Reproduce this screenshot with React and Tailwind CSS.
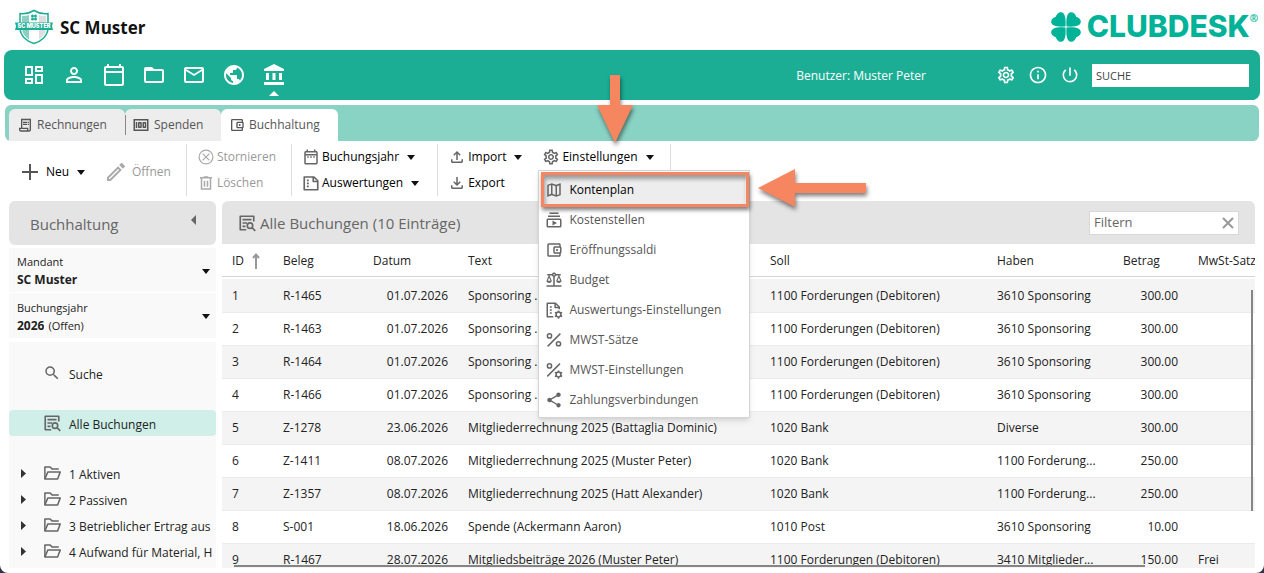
import { useState } from 'react'
import {
    MdAccountBalance,
    MdFolderOpen,
    MdInfoOutline,
    MdMailOutline,
    MdOutlineAccountBalanceWallet,
    MdOutlineBalance,
    MdOutlineCalendarToday,
    MdOutlineDashboard,
    MdOutlineDateRange,
    MdOutlineEdit,
    MdOutlineFileDownload,
    MdOutlineFileUpload,
    MdOutlineMap,
    MdOutlineMoney,
    MdOutlineReceiptLong,
    MdOutlineSettings,
    MdOutlineSubscriptions,
    MdPersonOutline,
    MdPowerSettingsNew,
    MdPublic,
    MdSearch,
    MdShare,
} from 'react-icons/md'

const mainNav = [
    { label: 'Dashboard', icon: MdOutlineDashboard },
    { label: 'Kontakte', icon: MdPersonOutline },
    { label: 'Kalender', icon: MdOutlineCalendarToday },
    { label: 'Dateien', icon: MdFolderOpen },
    { label: 'E-Mail', icon: MdMailOutline },
    { label: 'Website', icon: MdPublic },
    { label: 'Finanzen', icon: MdAccountBalance, active: true },
]

const bookings = [
    ['1', 'R-1465', '01.07.2026', 'Sponsoring ...', '1100 Forderungen (Debitoren)', '3610 Sponsoring', '300.00', ''],
    ['2', 'R-1463', '01.07.2026', 'Sponsoring ...', '1100 Forderungen (Debitoren)', '3610 Sponsoring', '300.00', ''],
    ['3', 'R-1464', '01.07.2026', 'Sponsoring ...', '1100 Forderungen (Debitoren)', '3610 Sponsoring', '300.00', ''],
    ['4', 'R-1466', '01.07.2026', 'Sponsoring ...', '1100 Forderungen (Debitoren)', '3610 Sponsoring', '300.00', ''],
    ['5', 'Z-1278', '23.06.2026', 'Mitgliederrechnung 2025 (Battaglia Dominic)', '1020 Bank', 'Diverse', '300.00', ''],
    ['6', 'Z-1411', '08.07.2026', 'Mitgliederrechnung 2025 (Muster Peter)', '1020 Bank', '1100 Forderung...', '250.00', ''],
    ['7', 'Z-1357', '08.07.2026', 'Mitgliederrechnung 2025 (Hatt Alexander)', '1020 Bank', '1100 Forderung...', '250.00', ''],
    ['8', 'S-001', '18.06.2026', 'Spende (Ackermann Aaron)', '1010 Post', '3610 Sponsoring', '10.00', ''],
    ['9', 'R-1467', '28.07.2026', 'Mitgliedsbeiträge 2026 (Muster Peter)', '1100 Forderungen (Debitoren)', '3410 Mitglieder...', '150.00', 'Frei'],
]

const accounts = ['1 Aktiven', '2 Passiven', '3 Betrieblicher Ertrag aus', '4 Aufwand für Material, H']

const Svg = ({ children, className, ...rest }) => (
    <svg
        viewBox="0 0 24 24"
        fill="none"
        stroke="currentColor"
        strokeWidth="2"
        aria-hidden="true"
        className={className}
        {...rest}
    >
        {children}
    </svg>
)

const ListSearchIcon = ({ className }) => (
    <Svg className={className} strokeWidth="2.2">
        <path d="M21 10V3H3v18h8" strokeLinejoin="round" />
        <path d="M6 7.5h12M6 12h6M6 16.5h4" />
        <circle cx="16" cy="15.5" r="3.6" />
        <path d="M18.5 18L23 22.5" />
    </Svg>
)

const FolderIcon = ({ className }) => (
    <Svg className={className} strokeLinejoin="round">
        <path d="M2.5 20V4h7L12 6.5h9" />
        <path d="M2.5 20L6.5 10.5H23L19.5 20z" />
    </Svg>
)

const ReportIcon = ({ className }) => (
    <Svg className={className} strokeWidth="2.2" strokeLinejoin="round">
        <path d="M3 4h13l5 5v12H3z" />
        <path d="M15 4v6h6" />
        <path d="M6.5 8.5H9M6.5 12.5H9M6.5 16.5H9" />
    </Svg>
)

const Cog = () => (
    <>
        <circle cx="18" cy="18" r="3.2" />
        <path d="M18 12.5v2M18 21.5v2M13.2 15.2l1.8 1M21 19.7l1.8 1M13.2 20.8l1.8-1M21 16.2l1.8-1" />
    </>
)

const ReportCogIcon = ({ className }) => (
    <Svg className={className} strokeLinejoin="round">
        <path d="M11 21H3V3h11l5 5v3" />
        <path d="M13.5 3v5.5H19" />
        <path d="M6.5 8H9M6.5 12H9M6.5 16H9" />
        <Cog />
    </Svg>
)

const PercentIcon = ({ className }) => (
    <Svg className={className}>
        <circle cx="6" cy="6.5" r="2.8" />
        <circle cx="18" cy="17" r="2.8" />
        <path d="M3.5 20.5L20.5 3.5" />
    </Svg>
)

const PercentCogIcon = ({ className }) => (
    <Svg className={className}>
        <circle cx="6" cy="6.5" r="2.8" />
        <path d="M3 20.5L20 3.5" />
        <Cog />
    </Svg>
)

const CancelIcon = ({ className }) => (
    <Svg className={className} strokeWidth="1.6">
        <circle cx="12" cy="12" r="9.2" />
        <path d="M7.5 7.5l9 9M16.5 7.5l-9 9" />
    </Svg>
)

const TrashIcon = ({ className }) => (
    <Svg className={className}>
        <path d="M4 5h16M9 4h6M6 5v15h12V5" />
        <path d="M10 9v8M14 9v8" />
    </Svg>
)

const Caret = () => (
    <svg viewBox="0 0 8 5" aria-hidden="true" className="h-[5px] w-2 shrink-0 fill-[#111]">
        <path d="M0 0h8L4 5z" />
    </svg>
)

const settingsMenu = [
    { label: 'Kontenplan', icon: MdOutlineMap, active: true },
    { label: 'Kostenstellen', icon: MdOutlineSubscriptions },
    { label: 'Eröffnungssaldi', icon: MdOutlineAccountBalanceWallet },
    { label: 'Budget', icon: MdOutlineBalance },
    { label: 'Auswertungs-Einstellungen', icon: ReportCogIcon },
    { label: 'MWST-Sätze', icon: PercentIcon },
    { label: 'MWST-Einstellungen', icon: PercentCogIcon },
    { label: 'Zahlungsverbindungen', icon: MdShare },
]

const ClubCrest = () => (
    <svg viewBox="0 0 38 36" aria-hidden="true" className="h-9 w-[38px]">
        <path d="M19 1.5C15 4 9 5 5 4.5v14C5 27 12 32.5 19 34.5 26 32.5 33 27 33 18.5v-14C29 5 23 4 19 1.5z" fill="#fff" stroke="#1bae94" strokeWidth="1.5" />
        <path d="M7 7c3 0 5-.3 7-1v24.500C10 28 7 24 7 18.500z" fill="#8cd0c2" />
        <path d="M24 6c2 .7 4 1 7 1v11.500c0 5.500-3 9.500-7 12z" fill="#dedede" />
        <g fill="#1bae94">
            <circle cx="17.5" cy="7" r="1.5" />
            <circle cx="20.5" cy="7" r="1.5" />
            <circle cx="17.5" cy="10" r="1.5" />
            <circle cx="20.5" cy="10" r="1.5" />
            <path d="M0 13.500h38l-1 3.700 1 3.800H0l1-3.800z" />
        </g>
        <text x="19" y="19.4" fontSize="5.6" fontWeight="900" fontFamily="Inter, sans-serif" textAnchor="middle" fill="#fff">
            SC MUSTER
        </text>
    </svg>
)

const Clover = () => (
    <svg viewBox="0 0 30 30" aria-hidden="true" className="size-[30px] fill-[#00b398]">
        {[0, 90, 180, 270].map((deg) => (
            <path
                key={deg}
                transform={`rotate(${deg} 15 15)`}
                d="M14.5 14.5C14.8 10 14.8 5 13 2 11.500-.5 8-.3 6.300 2 5.500 3 5 4 4.800 4.800 4 5 3 5.500 2 6.300-.3 8-.5 11.500 2 13 5 14.800 10 14.800 14.500 14.500z"
            />
        ))}
    </svg>
)

const TopBar = () => (
    <nav className="flex h-[50px] shrink-0 items-center rounded-lg bg-[#1bae94] pr-[11px] pl-[18px] text-white">
        <div className="flex gap-4">
            {mainNav.map(({ label, icon: Icon, active }) => (
                <a key={label} href="#" aria-label={label} className="relative">
                    <Icon className="size-6" />
                    {active && (
                        <svg viewBox="0 0 10 5" aria-hidden="true" className="absolute top-7 left-[7px] h-[5px] w-2.5 fill-white">
                            <path d="M0 5h10L5 0z" />
                        </svg>
                    )}
                </a>
            ))}
        </div>
        <span className="mr-[70px] ml-auto pt-0.5 text-[12px]">Benutzer: Muster Peter</span>
        <div className="flex gap-3">
            <button type="button" aria-label="Einstellungen">
                <MdOutlineSettings className="size-5" />
            </button>
            <button type="button" aria-label="Info">
                <MdInfoOutline className="size-5" />
            </button>
            <button type="button" aria-label="Abmelden">
                <MdPowerSettingsNew className="size-5" />
            </button>
        </div>
        <input
            type="search"
            aria-label="Suche"
            placeholder="SUCHE"
            className="ml-3 h-[23px] w-[157px] bg-white px-1 text-[11px] text-[#333] outline-none placeholder:text-[#444]"
        />
    </nav>
)

const Tabs = () => (
    <div className="mx-px mt-[5px] flex h-9 shrink-0 items-end rounded-md bg-[#89d3c4] pl-1 text-[12px] text-[#555]">
        <a href="#" className="flex h-8 w-[116px] items-center gap-1 rounded-t-md bg-[#ededed] pl-2">
            <MdOutlineReceiptLong className="size-4" />
            Rechnungen
        </a>
        <a href="#" className="flex h-8 w-24 items-center rounded-t-md bg-[#ededed]">
            <span className="mr-1.5 h-5 border-l border-[#888]" />
            <MdOutlineMoney className="mr-1 size-[18px]" />
            Spenden
        </a>
        <a href="#" aria-current="page" className="flex h-8 w-[117px] items-center gap-1 rounded-t-md bg-white pl-2">
            <MdOutlineAccountBalanceWallet className="size-4" />
            Buchhaltung
        </a>
    </div>
)

const SettingsDropdown = () => (
    <div className="relative">
        <button type="button" aria-haspopup="menu" aria-expanded="true" className="flex h-[26px] items-center gap-0.5">
            <MdOutlineSettings className="size-[18px] text-[#666]" />
            <span className="mr-1.5">Einstellungen</span>
            <Caret />
        </button>

        <ul
            role="menu"
            className="absolute top-[26px] -left-1 z-20 w-[212px] border border-[#d4d4d4] bg-white px-1 pt-1 pb-0.5 shadow-md"
        >
            {settingsMenu.map(({ label, icon: Icon, active }) => (
                <li key={label} role="none">
                    <button
                        type="button"
                        role="menuitem"
                        className={
                            active
                                ? 'flex h-[30px] w-full items-center gap-1.5 bg-[#ededed] px-0.5 text-black'
                                : 'flex h-[30px] w-full items-center gap-1.5 px-0.5 text-[#555]'
                        }
                    >
                        <Icon className="size-[18px] text-[#666]" />
                        {label}
                    </button>
                </li>
            ))}
            <li
                aria-hidden="true"
                className="pointer-events-none absolute top-px right-0 left-0.5 h-[35px] border-3 border-[#f58660] shadow-[1px_3px_4px_rgba(0,0,0,0.5),inset_1px_4px_4px_rgba(0,0,0,0.35)]"
            />
        </ul>

        {/* callout arrows */}
        <svg
            viewBox="0 0 36 68"
            aria-hidden="true"
            className="absolute -top-[69px] left-[55px] z-30 h-[68px] w-9 fill-[#f58660] drop-shadow-[1px_3px_2px_rgba(0,0,0,0.5)]"
        >
            <path d="M13 0h10v30h13L18 68 0 30h13z" />
        </svg>
        <svg
            viewBox="0 0 108 38"
            aria-hidden="true"
            className="absolute top-[25px] left-[216px] z-30 h-[38px] w-[108px] fill-[#f58660] drop-shadow-[1px_3px_2px_rgba(0,0,0,0.5)]"
        >
            <path d="M0 19L37 0v14h71v10H37v14z" />
        </svg>
    </div>
)

const toolButton = 'flex h-[26px] items-center gap-0.5'

const Toolbar = () => (
    <div className="flex h-[60px] shrink-0 items-start px-[18px] pt-[3px] text-[12px] text-black">
        <div className="flex h-14 items-center">
            <button type="button" className="flex w-[82px] items-center">
                <svg viewBox="0 0 16 16" aria-hidden="true" className="mr-2 size-4 stroke-[#555]" fill="none" strokeWidth="2">
                    <path d="M8 0v16M0 8h16" />
                </svg>
                <span className="mr-2">Neu</span>
                <Caret />
            </button>
            <button type="button" disabled className="flex items-center gap-1 text-[#999]">
                <MdOutlineEdit className="size-6 text-[#aaa]" />
                Öffnen
            </button>
        </div>
        <div className="ml-[15px] border-l border-[#ddd] pl-2.5 text-[#999]">
            <button type="button" disabled className={toolButton}>
                <CancelIcon className="size-[18px] text-[#aaa]" />
                Stornieren
            </button>
            <button type="button" disabled className={toolButton}>
                <TrashIcon className="size-[18px] text-[#aaa]" />
                Löschen
            </button>
        </div>
        <div className="ml-[15px] border-l border-[#ddd] pl-2.5">
            <button type="button" className={toolButton}>
                <MdOutlineDateRange className="size-[18px] text-[#666]" />
                <span className="mr-1.5">Buchungsjahr</span>
                <Caret />
            </button>
            <button type="button" className={toolButton}>
                <ReportIcon className="size-[18px] text-[#666]" />
                <span className="mr-1.5">Auswertungen</span>
                <Caret />
            </button>
        </div>
        <div className="ml-[18px] border-l border-[#ddd] pl-2.5">
            <button type="button" className={toolButton}>
                <MdOutlineFileUpload className="size-[18px] text-[#666]" />
                <span className="mr-1.5">Import</span>
                <Caret />
            </button>
            <button type="button" className={toolButton}>
                <MdOutlineFileDownload className="size-[18px] text-[#666]" />
                Export
            </button>
        </div>
        <div className="ml-5 h-[52px] border-r border-[#ddd] pr-4">
            <SettingsDropdown />
        </div>
    </div>
)

const Sidebar = () => (
    <aside className="flex w-[207px] shrink-0 flex-col text-[12px] text-[#222]">
        <div className="flex h-11 shrink-0 items-center justify-between rounded-md bg-[#e4e4e4] pr-5 pl-[21px]">
            <h2 className="pt-0.5 text-[15px] text-[#666]">Buchhaltung</h2>
            <button type="button" aria-label="Einklappen">
                <svg viewBox="0 0 5 10" aria-hidden="true" className="mb-1.5 h-2.5 w-[5px] fill-[#666]">
                    <path d="M5 0v10L0 5z" />
                </svg>
            </button>
        </div>

        <div className="mt-[3px] flex h-11 shrink-0 items-center bg-[#f9f9f9] pt-0.5 pr-1.5 pl-2">
            <div className="grow">
                <label htmlFor="mandant" className="block text-[11px] leading-[18px]">
                    Mandant
                </label>
                <select id="mandant" className="block w-full appearance-none leading-[18px] font-bold outline-none">
                    <option>SC Muster</option>
                </select>
            </div>
            <Caret />
        </div>
        <div className="mt-px flex h-[45px] shrink-0 items-center bg-[#f9f9f9] pt-0.5 pr-1.5 pl-2">
            <div className="grow">
                <label htmlFor="jahr" className="block text-[11px] leading-[18px]">
                    Buchungsjahr
                </label>
                <div className="flex gap-1 leading-[18px]">
                    <select id="jahr" className="field-sizing-content appearance-none font-bold outline-none">
                        <option>2026</option>
                    </select>
                    <span className="text-[11px]">(Offen)</span>
                </div>
            </div>
            <Caret />
        </div>

        <nav className="mt-1 min-h-0 grow overflow-hidden bg-[#f9f9f9] pt-[18px]">
            <a href="#" className="flex h-[26px] items-center gap-2 pt-1 pl-[34px]">
                <MdSearch className="mb-1 size-[18px] text-[#666]" />
                Suche
            </a>
            <a href="#" aria-current="page" className="mt-6 flex h-[26px] items-center gap-2 rounded-sm bg-[#d0efe9] pt-1 pl-[34px]">
                <ListSearchIcon className="mb-1 size-[18px] text-[#666]" />
                Alle Buchungen
            </a>
            <ul className="mt-6">
                {accounts.map((name) => (
                    <li key={name}>
                        <a href="#" className="flex h-[26px] items-center gap-2 pt-1 pl-3 whitespace-nowrap">
                            <svg viewBox="0 0 5 9" aria-hidden="true" className="mr-[9px] mb-1 h-[9px] w-[5px] shrink-0 fill-[#333]">
                                <path d="M0 0v9l5-4.500z" />
                            </svg>
                            <FolderIcon className="mb-1 size-[18px] shrink-0 text-[#666]" />
                            {name}
                        </a>
                    </li>
                ))}
            </ul>
        </nav>
    </aside>
)

const BookingsTable = () => {
    const [filter, setFilter] = useState('')
    const rows = bookings.filter((row) => row.join(' ').toLowerCase().includes(filter.toLowerCase()))

    return (
        <main className="flex min-w-0 grow flex-col">
            <div className="flex h-[43px] shrink-0 items-center rounded-t-md bg-[#e4e4e4] pr-4 pl-4 text-[#666]">
                <ListSearchIcon className="mr-1 size-[18px]" />
                <h1 className="pt-0.5 text-[15px]">Alle Buchungen (10 Einträge)</h1>
                <div className="ml-auto flex h-6 w-[150px] items-center border border-[#d8d8d8] bg-white pr-1 pl-1">
                    <input
                        type="text"
                        aria-label="Filtern"
                        placeholder="Filtern"
                        value={filter}
                        onChange={(e) => setFilter(e.target.value)}
                        className="min-w-0 grow text-[13px] outline-none placeholder:text-[#666]"
                    />
                    <button type="button" aria-label="Filter löschen" onClick={() => setFilter('')}>
                        <Svg className="size-3 text-[#999]" strokeWidth="4">
                            <path d="M2 2l20 20M22 2L2 22" />
                        </Svg>
                    </button>
                </div>
            </div>

            <div className="relative min-h-0 grow overflow-hidden">
                <table className="w-full table-fixed border-collapse text-left text-[12px] whitespace-nowrap text-[#222]">
                    <colgroup>
                        <col className="w-[51px]" />
                        <col className="w-[90px]" />
                        <col className="w-[95px]" />
                        <col />
                        <col className="w-[227px]" />
                        <col className="w-[126px]" />
                        <col className="w-[75px]" />
                        <col className="w-[67px]" />
                    </colgroup>
                    <thead>
                        <tr className="h-8 border-b border-[#d4d4d4] [&>th]:px-2.5 [&>th]:pt-0.5 [&>th]:font-normal">
                            <th>
                                <span className="flex items-center gap-2">
                                    ID
                                    <Svg viewBox="0 0 8 16" className="h-4 w-2 text-[#999]" strokeWidth="2">
                                        <path d="M4 16V1M1 5l3-3.500L7 5" />
                                    </Svg>
                                </span>
                            </th>
                            <th>Beleg</th>
                            <th>Datum</th>
                            <th>Text</th>
                            <th>Soll</th>
                            <th>Haben</th>
                            <th>Betrag</th>
                            <th>MwSt-Satz</th>
                        </tr>
                    </thead>
                    <tbody>
                        <tr aria-hidden="true" className="h-[3px]" />
                        {rows.map(([id, beleg, datum, text, soll, haben, betrag, mwst]) => (
                            <tr key={id} className="h-[33px] border-b border-[#ebebeb] odd:bg-white even:bg-[#f4f4f4] [&>td]:px-2.5 [&>td]:pt-px">
                                <td>{id}</td>
                                <td>{beleg}</td>
                                <td className="text-right">{datum}</td>
                                <td>{text}</td>
                                <td>{soll}</td>
                                <td>{haben}</td>
                                <td className="text-right">{betrag}</td>
                                <td>{mwst}</td>
                            </tr>
                        ))}
                    </tbody>
                </table>
                {/* slim scrollbars */}
                <div className="absolute top-[46px] right-0.5 bottom-[57px] w-0.5 bg-[#858585]" />
                <div className="absolute right-[110px] bottom-px left-3 h-0.5 bg-[#858585]" />
            </div>
        </main>
    )
}

const App = () => (
    <div className="h-screen bg-[#2b3648] font-['Open_Sans',sans-serif]">
        <div className="flex h-full flex-col overflow-hidden rounded-b-lg bg-white px-1 pb-[5px]">
            <header className="flex h-[50px] shrink-0 items-center justify-between pt-[3px] pr-0.5 pl-[11px]">
                <div className="flex items-center gap-[7px]">
                    <ClubCrest />
                    <span className="pt-0.5 text-[17px] font-bold text-[#111]">SC Muster</span>
                </div>
                <div className="flex items-center text-[#00b398]">
                    <Clover />
                    <span className="ml-1.5 font-['Inter',sans-serif] text-[30px] font-extrabold">CLUBDESK</span>
                    <span className="mb-4 text-[10px] font-bold">®</span>
                </div>
            </header>
            <TopBar />
            <Tabs />
            <Toolbar />
            <div className="flex min-h-0 grow gap-1.5 pr-[5px] pl-[5px]">
                <Sidebar />
                <BookingsTable />
            </div>
        </div>
    </div>
)

export default App
